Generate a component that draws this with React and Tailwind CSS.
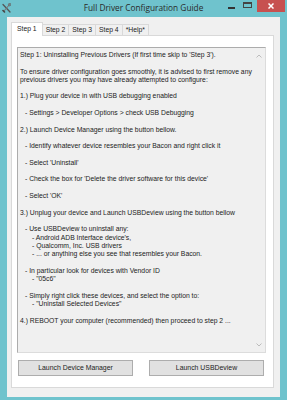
import React from 'react';

const lines = [
  ["Step 1: Uninstalling Previous Drivers (If first time skip to 'Step 3').", 0],
  ['', 0],
  ['To ensure driver configuration goes smoothly, it is advised to first remove any', 0],
  ['previous drivers you may have already attempted to configure:', 0],
  ['', 0],
  ['1.) Plug your device in with USB debugging enabled', 0],
  ['', 0],
  ['- Settings > Developer Options > check USB Debugging', 1],
  ['', 0],
  ['2.) Launch Device Manager using the button bellow.', 0],
  ['', 0],
  ['- Identify whatever device resembles your Bacon and right click it', 1],
  ['', 0],
  ["- Select 'Uninstall'", 1],
  ['', 0],
  ["- Check the box for 'Delete the driver software for this device'", 1],
  ['', 0],
  ["- Select 'OK'", 1],
  ['', 0],
  ['3.) Unplug your device and Launch USBDeview using the button bellow', 0],
  ['', 0],
  ['- Use USBDeview to uninstall any:', 1],
  ["- Android ADB Interface device's,", 2],
  ['- Qualcomm, Inc. USB drivers', 2],
  ['- ... or anything else you see that resembles your Bacon.', 2],
  ['', 0],
  ['- In particular look for devices with Vendor ID', 1],
  ['- "05c6"', 2],
  ['', 0],
  ['- Simply right click these devices, and select the option to:', 1],
  ['- "Uninstall Selected Devices"', 2],
  ['', 0],
  ['4.) REBOOT your computer (recommended) then proceed to step 2 ...', 0],
];

const tabs = ['Step 1', 'Step 2', 'Step 3', 'Step 4', '*Help*'];

const indent = ['pl-0', 'pl-[5px]', 'pl-[12px]'];

const ToolsIcon = () => (
  <svg width="9" height="10" viewBox="0 0 9 10" className="ml-[2px] mt-[3px]">
    <path d="M1 1.5 L8 9" stroke="#555" strokeWidth="1.3" strokeLinecap="round" />
    <path d="M8 1 L2 8" stroke="#777" strokeWidth="1.1" strokeLinecap="round" />
    <path d="M1 7.5 L2.5 9" stroke="#444" strokeWidth="1.6" strokeLinecap="round" />
    <circle cx="7.6" cy="1.6" r="1.2" fill="none" stroke="#666" strokeWidth="0.9" />
  </svg>
);

const Chevron = ({ up }) => (
  <svg width="6" height="4" viewBox="0 0 6 4">
    <path d={up ? 'M0.5 3.5 L3 1 L5.5 3.5' : 'M0.5 0.5 L3 3 L5.5 0.5'} fill="none" stroke="#b5b5b5" strokeWidth="0.9" />
  </svg>
);

export default function App() {
  return (
    <div
      className="w-[287px] h-[400px] bg-[#6fc3cd] flex flex-col overflow-hidden text-[#1c1c1c]"
      style={{ fontFamily: '"Liberation Sans", Arial, sans-serif' }}
    >
      {/* Title bar */}
      <div className="h-[17px] grid grid-cols-[1fr_auto_1fr] items-start">
        <div className="flex">
          <ToolsIcon />
        </div>
        <div
          className="text-[8.3px] leading-none pt-[4px] text-[#2a2a2a]"
          style={{ fontFamily: '"Open Sans", "Noto Sans", sans-serif' }}
        >
          Full Driver Configuration Guide
        </div>
        <div className="flex justify-end items-start pr-[2px]">
          <div className="w-[7px] h-[1.5px] bg-[#333] mt-[7px] mr-[8px]" />
          <div className="w-[9px] h-[6px] border border-[#444] border-t-2 mt-[2px] mr-[5px]" />
          <div className="w-[28px] h-[12px] bg-[#c75150] flex items-center justify-center">
            <svg width="6" height="6" viewBox="0 0 6 6">
              <path d="M0.5 0.5 L5.5 5.5 M5.5 0.5 L0.5 5.5" stroke="#fff" strokeWidth="1.5" />
            </svg>
          </div>
        </div>
      </div>

      {/* Window body */}
      <div className="flex-1 mx-[7px] mb-[3px] bg-[#f0f0f0] pt-[5px] pl-[4px] pr-[6px] pb-[9px] flex flex-col text-[6.8px]">
        {/* Tabs */}
        <div className="flex items-end h-[13px] relative z-10">
          {tabs.map((t, i) =>
            i === 0 ? (
              <div
                key={t}
                className="h-[14px] -mb-px px-[5px] bg-white border border-b-0 border-[#d9d9d9] flex items-center leading-none"
              >
                {t}
              </div>
            ) : (
              <div
                key={t}
                className="h-[11px] px-[3px] bg-[#f0f0f0] border-t border-r border-[#d9d9d9] flex items-center leading-none"
              >
                {t}
              </div>
            )
          )}
        </div>

        {/* Tab page */}
        <div className="flex-1 bg-white border border-[#d9d9d9] pt-[11px] pl-[5px] pr-[7px] flex flex-col">
          <div className="h-[306px] bg-[#f0f0f0] border border-[#acacac] border-r-[#dcdcdc] border-b-[#dcdcdc] flex">
            <div className="flex-1 pt-[3px] pl-[2px] leading-[8.31px] whitespace-pre">
              {lines.map(([text, lvl], i) => (
                <div key={i} className={`h-[8.31px] ${indent[lvl]}`}>
                  {text}
                </div>
              ))}
            </div>
            <div className="w-[12px] flex flex-col items-center justify-between pt-[6px] pb-[5px]">
              <Chevron up />
              <Chevron />
            </div>
          </div>

          <div className="flex gap-[16px] pl-[1px] mt-[7px]">
            <button className="w-[115px] h-[16px] bg-[#e1e1e1] border border-[#adadad] leading-none text-[6.9px]">
              Launch Device Manager
            </button>
            <button className="w-[115px] h-[16px] bg-[#e1e1e1] border border-[#adadad] leading-none text-[6.9px]">
              Launch USBDeview
            </button>
          </div>
        </div>
      </div>
    </div>
  );
}
